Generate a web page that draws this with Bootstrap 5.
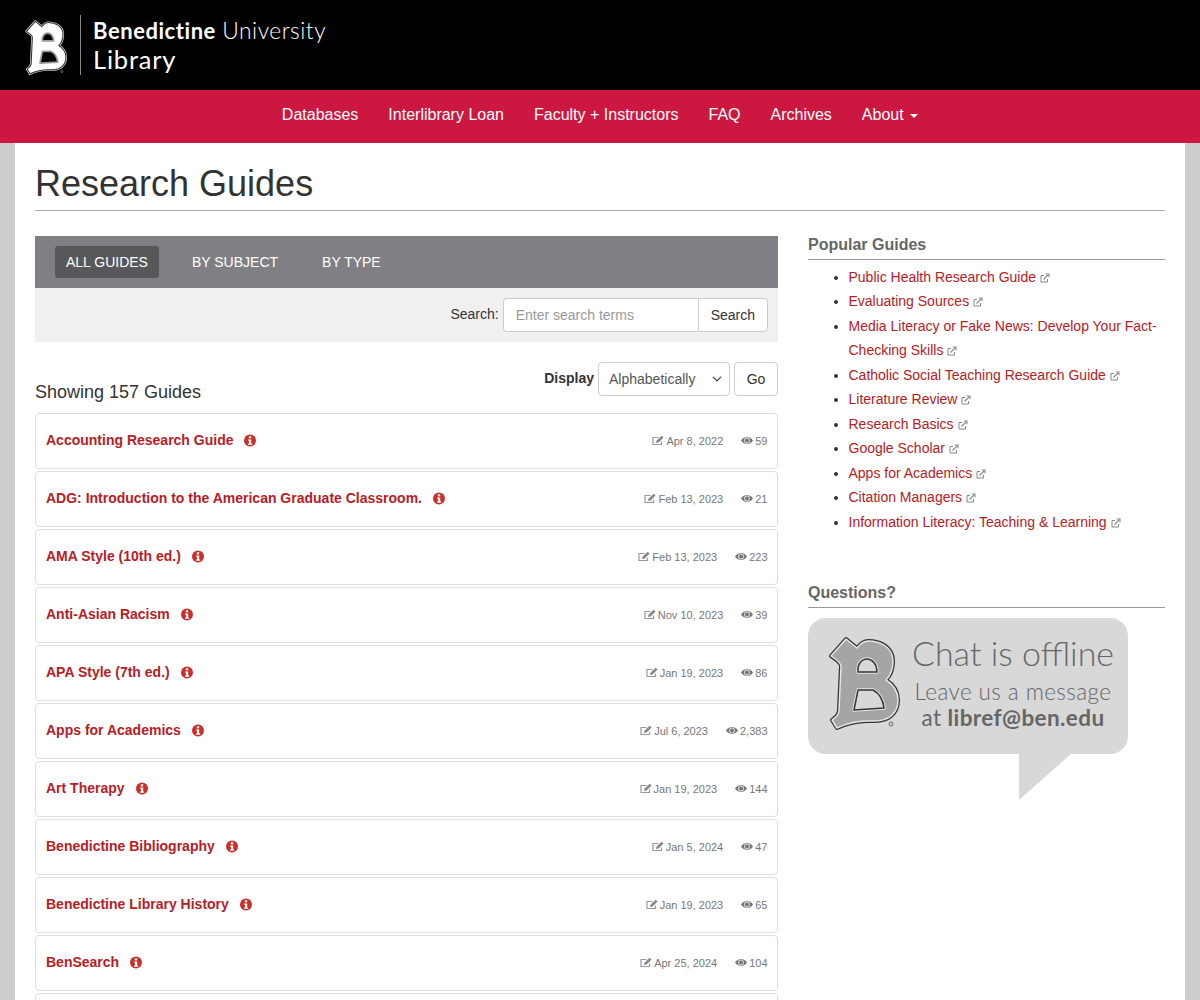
<!DOCTYPE html>
<html lang="en"><head><meta charset="utf-8"><title>Research Guides</title>
<link href="https://cdn.jsdelivr.net/npm/bootstrap@5.3.0/dist/css/bootstrap.min.css" rel="stylesheet">
<style>
html,body{height:1000px;overflow:hidden}
body{background:#ccc;font-family:"Liberation Sans",Arial,sans-serif;font-size:14px;color:#333}
.top-brand{background:#000;height:90px;padding:15px 0 0 20px;color:#fff}
.logo-b{width:53px;height:62px;margin-top:1px;flex:none}
.brand-rule{width:1px;height:60px;background:#888;margin:0 12px 0 7px}
.brand-text{font-family:Lato,sans-serif;line-height:1}
.brand-l1{margin-top:1px;height:27px;line-height:28px;font-size:22.8px;white-space:nowrap;letter-spacing:.5px}
.brand-l1 b{font-weight:700;font-size:22px;letter-spacing:.55px}.brand-l1 span{font-weight:300}
.brand-l2{font-size:25.5px;line-height:32px;font-weight:400;letter-spacing:.8px}
.red-nav{background:#cc1840;height:53px;font-size:16px}
.red-nav .nav-link{color:#fff;padding:0 15px;line-height:49px;font-size:16px}
.caret-down{display:inline-block;border-top:4px solid #fff;border-left:4px solid transparent;border-right:4px solid transparent;vertical-align:middle;margin-left:2px}
.page-shell{background:#fff;margin:0 15px;padding:0 20px;height:857px;overflow:hidden}
.page-title{font-family:"Liberation Sans",sans-serif;font-size:36px;font-weight:400;margin:0 0 25px;padding:21px 0 6px;line-height:40px;border-bottom:1px solid #aaa;color:#333}
.main-col{width:743px}.side-col{width:357px}
.tab-bar{background:#807f84;height:52px;padding:10px 20px}
.tab-pill{color:#fff;font-size:14px;text-transform:uppercase;padding:0 11px;line-height:32px;height:32px;border-radius:3px;text-decoration:none;margin-right:22px}
.tab-pill.on{background:#58585a;margin-right:22px}
.search-band{background:#f0f0f0;height:54px;padding:10px}
.search-band label{margin-right:4px;margin-bottom:0;line-height:32px}
.search-input.form-control{width:195px;height:34px;font-size:14px;padding:6px 12px;border-color:#ccc;border-radius:4px 0 0 4px;border-right:0;color:#555;background:#fff}
.search-input::placeholder{color:#999}
.plain-btn.btn{font-size:14px;height:34px;padding:6px 12px;border:1px solid #ccc;background:#fff;color:#333;line-height:20px;border-radius:4px}
.plain-btn.joined{border-radius:0 4px 4px 0}
.plain-btn.go-btn{width:44px;padding:6px 0}
.show-row{height:71px}
.show-label{font-size:18px;line-height:20px;margin-top:40px}
.display-form{margin-top:20px;gap:4px}
.display-form b{font-size:14px;line-height:32px}
.sort-select.form-select{width:132px;height:34px;padding:6px 10px;font-size:14px;border-color:#ccc;color:#555;border-radius:4px;background-position:right 6px center;background-size:12px 10px}
.guide-row{height:56px;border:1px solid #ddd;border-radius:4px;margin-bottom:2px;padding:0 9.5px 0 10px;align-items:center}
.guide-name{font-weight:700;color:#b62025;font-size:14px;text-decoration:none}
.name-wrap{margin-top:-2px}
.info-dot{width:12px;height:13px;margin-left:11px;vertical-align:-2px}
.guide-meta{font-size:11px;color:#777}
.guide-date{white-space:nowrap}
.mini-ico{width:12px;height:11px;vertical-align:-1px;margin-right:2px}
.guide-hits{margin-left:18px;white-space:nowrap}
.side-head{font-size:16px;font-weight:700;color:#666;border-bottom:1px solid #999;margin:0;padding:0 0 6px;line-height:17px}
.pop-list{margin:4.7px 0 0;padding:0 0 0 40.5px;line-height:24.5px;list-style:disc}
.pop-list a{color:#b62025;text-decoration:none}
.ext-ico{width:10px;height:10px;margin-left:4px;vertical-align:-1px}
.q-block{margin-top:50.3px}
.chat-bubble{width:320px;height:136px;background:#d8d8d8;border-radius:18px;margin-top:10px;padding:12px 0 0 12px;color:#666;font-family:Lato,sans-serif;white-space:nowrap}
.chat-tail{display:block;width:52px;height:46px;margin-left:211px}
.chat-b{width:90px;height:105px;flex:none}
.chat-copy{width:206px}
.chat-l1{font-size:34px;line-height:46px;font-weight:300;text-align:center}
.chat-l2{font-size:22.5px;line-height:25px;text-align:center;margin-top:3px;font-weight:300;letter-spacing:.4px}
.chat-l3{font-size:22.5px;line-height:27px;text-align:center;font-weight:400;letter-spacing:.4px}
.chat-l3 b{font-weight:700}
.b-art use{stroke-linejoin:round}
</style></head>
<body>
<svg width="0" height="0" class="position-absolute"><defs>
<path id="bOuter" d="M11 26 L26 9 L37 18 C41 13 44 11 48 11 C60 11 73 17 73 31 C73 40 70 46 66 50 C74 55 78 62 78 70 C78 84 68 91 55 91 L47 91 C38 91 28 93 17 98 L12 90 C16 87 19 85 19 80 L21 36 C21 33 17 30 11 26 Z"/>
<path id="bTop" d="M38 42 C37 34 42 29 47 29 C52 29 57 34 57 42 Z"/>
<path id="bBot" d="M38 60 H53 C59 63 63 70 64 78 L34 80 Z"/>
</defs></svg>
<header class="top-brand d-flex">
<svg class="logo-b b-art" viewBox="0 0 90 105"><use href="#bOuter" fill="#fff" stroke="#ddd" stroke-width="4"/><use href="#bOuter" fill="#fff" stroke="#333" stroke-width="1.8"/><use href="#bTop" fill="#000" stroke="#999" stroke-width="3"/><use href="#bBot" fill="#000" stroke="#999" stroke-width="3"/><circle cx="71" cy="94" r="1.8" fill="none" stroke="#aaa"/></svg>
<div class="brand-rule"></div>
<div class="brand-text"><div class="brand-l1"><b>Benedictine</b> <span>University</span></div><div class="brand-l2">Library</div></div>
</header>
<nav class="red-nav d-flex justify-content-center">
<ul class="nav">
<li class="nav-item"><a class="nav-link" href="#">Databases</a></li>
<li class="nav-item"><a class="nav-link" href="#">Interlibrary Loan</a></li>
<li class="nav-item"><a class="nav-link" href="#">Faculty + Instructors</a></li>
<li class="nav-item"><a class="nav-link" href="#">FAQ</a></li>
<li class="nav-item"><a class="nav-link" href="#">Archives</a></li>
<li class="nav-item"><a class="nav-link" href="#">About <span class="caret-down"></span></a></li>
</ul>
</nav>
<main class="page-shell">
<h1 class="page-title">Research Guides</h1>
<div class="d-flex justify-content-between">
<section class="main-col">
<div class="tab-bar d-flex">
<a class="tab-pill on" href="#">All Guides</a><a class="tab-pill" href="#">By Subject</a><a class="tab-pill" href="#">By Type</a>
</div>
<div class="search-band d-flex justify-content-end align-items-start">
<label for="q">Search:</label>
<input id="q" class="form-control search-input" placeholder="Enter search terms">
<button class="btn plain-btn joined">Search</button>
</div>
<div class="show-row d-flex justify-content-between">
<div class="show-label">Showing 157 Guides</div>
<div class="display-form d-flex align-items-start">
<b>Display</b>
<select class="form-select sort-select"><option>Alphabetically</option></select>
<button class="btn plain-btn go-btn">Go</button>
</div>
</div>
<div id="rows"></div>
</section>
<aside class="side-col">
<h2 class="side-head">Popular Guides</h2>
<ul class="pop-list" id="pop"></ul>
<div class="q-block">
<h2 class="side-head">Questions?</h2>
<div class="chat-bubble d-flex">
<svg class="chat-b b-art" viewBox="0 0 90 105"><use href="#bOuter" fill="#a5a5a5" stroke="#333" stroke-width="4"/><use href="#bOuter" fill="#a5a5a5" stroke="#e6e6e6" stroke-width="1.5"/><use href="#bTop" fill="#d8d8d8" stroke="#e6e6e6" stroke-width="3.4"/><use href="#bTop" fill="#d8d8d8" stroke="#333" stroke-width="1.5"/><use href="#bBot" fill="#d8d8d8" stroke="#e6e6e6" stroke-width="3.4"/><use href="#bBot" fill="#d8d8d8" stroke="#333" stroke-width="1.5"/><circle cx="71" cy="94" r="2" fill="none" stroke="#666"/></svg>
<div class="chat-copy"><div class="chat-l1">Chat is offline</div><div class="chat-l2">Leave us a message</div><div class="chat-l3">at <b>libref@ben.edu</b></div></div>
</div>
<svg class="chat-tail" viewBox="0 0 52 46"><path d="M0 0H52L0 46Z" fill="#d8d8d8"/></svg>
</div>
</aside>
</div>
</main>
<script>
var rows=[["Accounting Research Guide","Apr 8, 2022","59"],["ADG: Introduction to the American Graduate Classroom.","Feb 13, 2023","21"],["AMA Style (10th ed.)","Feb 13, 2023","223"],["Anti-Asian Racism","Nov 10, 2023","39"],["APA Style (7th ed.)","Jan 19, 2023","86"],["Apps for Academics","Jul 6, 2023","2,383"],["Art Therapy","Jan 19, 2023","144"],["Benedictine Bibliography","Jan 5, 2024","47"],["Benedictine Library History","Jan 19, 2023","65"],["BenSearch","Apr 25, 2024","104"]];
var info='<svg class="info-dot" viewBox="0 0 12 12"><circle cx="6" cy="6" r="6" fill="#c9302c"/><rect x="4.8" y="1.8" width="2.4" height="2" fill="#fff"/><path d="M4.2 5H7.2V9H8.2V10.2H4V9H5V6.2H4.2Z" fill="#fff"/></svg>';
var edit='<svg class="mini-ico" viewBox="0 0 12 11"><path d="M9.5 6.5V9.5H1V2.5H6.5" fill="none" stroke="#999" stroke-width="1.2"/><path d="M4 8L4.6 5.6 9.7.7 11.6 2.5 6.6 7.5Z" fill="#888"/></svg>';
var eye='<svg class="mini-ico" viewBox="0 0 12 11"><path d="M0 5.5C1.8 2.7 4 2 6 2S10.2 2.7 12 5.5C10.2 8.3 8 9 6 9S1.8 8.3 0 5.5Z" fill="#777"/><circle cx="6" cy="5.5" r="2.9" fill="#ddd"/><circle cx="6" cy="5.5" r="2" fill="#777"/></svg>';
document.getElementById('rows').innerHTML=rows.map(function(r){return '<div class="guide-row d-flex justify-content-between"><div class="name-wrap"><a class="guide-name" href="#">'+r[0]+'</a>'+info+'</div><div class="guide-meta d-flex"><span class="guide-date">'+edit+r[1]+'</span><span class="guide-hits">'+eye+r[2]+'</span></div></div>'}).join('')+'<div class="guide-row"></div>';
var pop=["Public Health Research Guide","Evaluating Sources","Media Literacy or Fake News: Develop Your Fact-Checking Skills","Catholic Social Teaching Research Guide","Literature Review","Research Basics","Google Scholar","Apps for Academics","Citation Managers","Information Literacy: Teaching &amp; Learning"];
var ext='<svg class="ext-ico" viewBox="0 0 10 10"><path d="M7.5 6v3H1V2.5H4" fill="none" stroke="#888" stroke-width="1"/><path d="M3.5 6.5L8 2M5.7 1H9V4.3" fill="none" stroke="#888" stroke-width="1.1"/></svg>';
document.getElementById('pop').innerHTML=pop.map(function(p){return '<li><a href="#">'+p+'</a>'+ext+'</li>'}).join('');
</script>
<script src="https://cdn.jsdelivr.net/npm/bootstrap@5.3.0/dist/js/bootstrap.bundle.min.js"></script>
</body></html>
